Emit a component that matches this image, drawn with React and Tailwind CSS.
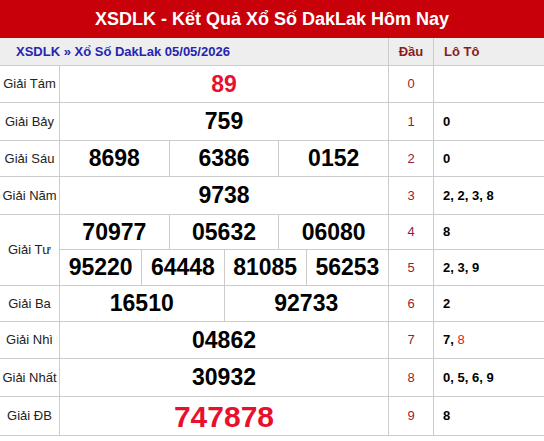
const rows = [
  { label: 'Giải Tám', nums: [['89']], red: true },
  { label: 'Giải Bảy', nums: [['759']] },
  { label: 'Giải Sáu', nums: [['8698', '6386', '0152']] },
  { label: 'Giải Năm', nums: [['9738']] },
  { label: 'Giải Tư', nums: [['70977', '05632', '06080'], ['95220', '64448', '81085', '56253']] },
  { label: 'Giải Ba', nums: [['16510', '92733']] },
  { label: 'Giải Nhì', nums: [['04862']] },
  { label: 'Giải Nhất', nums: [['30932']] },
  { label: 'Giải ĐB', nums: [['747878']], special: true },
];

const loto = [
  [],
  ['0'],
  ['0'],
  ['2', '2', '3', '8'],
  ['8'],
  ['2', '3', '9'],
  ['2'],
  ['7', { v: '8', red: true }],
  ['0', '5', '6', '9'],
  ['8'],
];

function NumCell({ list, red, special }) {
  return (
    <div className="flex border-b border-r border-[#cccccc]">
      {list.map((n, i) => (
        <div
          key={i}
          className={`flex-1 flex items-center justify-center font-bold ${i > 0 ? 'border-l border-[#cccccc]' : ''} ${special ? 'text-[30px] text-[#e8112d]' : red ? 'text-[23px] text-[#e8112d]' : 'text-[23px] text-black'}`}
        >
          {n}
        </div>
      ))}
    </div>
  );
}

function LotoCell({ items }) {
  return (
    <div className="flex items-center pl-[9px] border-b border-[#cccccc] text-[13px] font-bold text-black">
      {items.map((it, i) => (
        <span key={i} className="whitespace-pre">
          {i > 0 && ', '}
          {typeof it === 'string' ? it : <span className="text-[#e8112d] font-normal">{it.v}</span>}
        </span>
      ))}
    </div>
  );
}

export default function App() {
  let idx = 0;
  const cells = [];
  rows.forEach((r) => {
    r.nums.forEach((list, j) => {
      const n = idx++;
      if (j === 0) {
        cells.push(
          <div
            key={`l${n}`}
            className={`flex items-center justify-center border-b border-r border-[#cccccc] text-[13px] text-[#222222] ${r.nums.length > 1 ? 'row-span-2' : ''}`}
          >
            {r.label}
          </div>
        );
      }
      cells.push(<NumCell key={`n${n}`} list={list} red={r.red} special={r.special} />);
      cells.push(
        <div key={`d${n}`} className="flex items-center justify-center border-b border-r border-[#cccccc] text-[13px] text-[#9b1b30]">
          {n}
        </div>
      );
      cells.push(<LotoCell key={`t${n}`} items={loto[n]} />);
    });
  });

  return (
    <div className="w-[544px] bg-white" style={{ fontFamily: '"Liberation Sans", Arial, sans-serif' }}>
      <div className="h-[38px] bg-[#c8000a] flex items-center justify-center text-white font-bold text-[18px]">
        XSDLK - Kết Quả Xổ Số DakLak Hôm Nay
      </div>
      <div className="grid grid-cols-[60px_329px_45px_110px] grid-rows-[28px_37px_38px_36px_38px_35px_36px_36px_37px_38px_39px]">
        {/* sub header */}
        <div className="col-span-2 flex items-center pl-[16px] bg-[#eeeeee] border-b border-r border-[#cccccc] text-[13px] font-bold text-[#2525b0]">
          XSDLK » Xổ Số DakLak 05/05/2026
        </div>
        <div className="flex items-center justify-center bg-[#eeeeee] border-b border-r border-[#cccccc] text-[13px] font-bold text-[#8b1c1c]">
          Đầu
        </div>
        <div className="flex items-center pl-[10px] bg-[#eeeeee] border-b border-[#cccccc] text-[13px] font-bold text-[#8b1c1c]">
          Lô Tô
        </div>
        {cells}
      </div>
    </div>
  );
}
